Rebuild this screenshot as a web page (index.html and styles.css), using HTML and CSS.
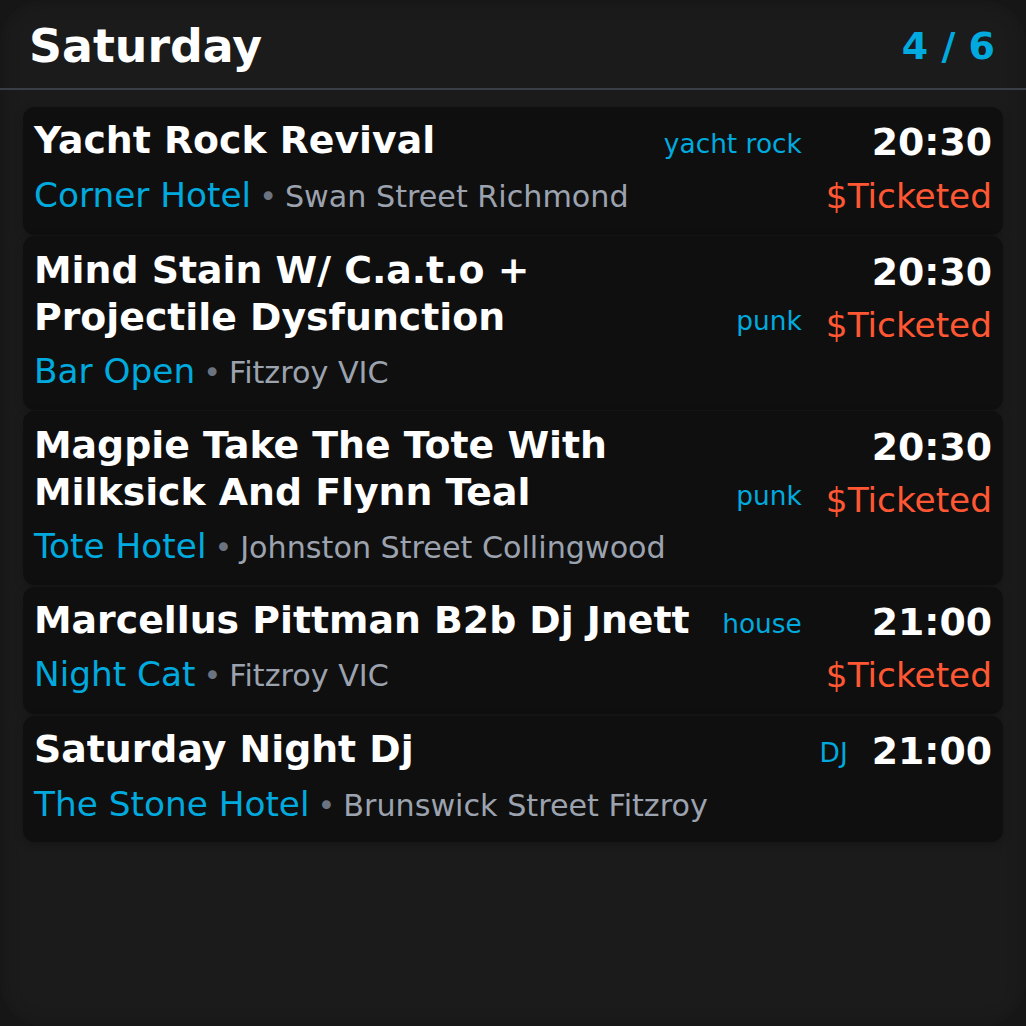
FILE: index.html
```html
<!DOCTYPE html>
<html lang="en">
<head>
<meta charset="utf-8">
<title>Saturday</title>
<link rel="stylesheet" href="styles.css">
</head>
<body>
<div class="app">
  <header class="top">
    <h1 class="day">Saturday</h1>
    <span class="count">4 / 6</span>
  </header>
  <ul class="list">
    <li class="card">
      <div class="main">
        <div class="head"><span class="title">Yacht Rock Revival</span><span class="genre">yacht rock</span></div>
        <div class="where"><span class="venue">Corner Hotel</span><span class="addr"><span class="dot">•</span>Swan Street Richmond</span></div>
      </div>
      <div class="side"><span class="time">20:30</span><span class="price">$Ticketed</span></div>
    </li>
    <li class="card">
      <div class="main">
        <div class="head"><span class="title">Mind Stain W/ C.a.t.o + Projectile Dysfunction</span><span class="genre">punk</span></div>
        <div class="where"><span class="venue">Bar Open</span><span class="addr"><span class="dot">•</span>Fitzroy VIC</span></div>
      </div>
      <div class="side"><span class="time">20:30</span><span class="price">$Ticketed</span></div>
    </li>
    <li class="card">
      <div class="main">
        <div class="head"><span class="title">Magpie Take The Tote With Milksick And Flynn Teal</span><span class="genre">punk</span></div>
        <div class="where"><span class="venue">Tote Hotel</span><span class="addr"><span class="dot">•</span>Johnston Street Collingwood</span></div>
      </div>
      <div class="side"><span class="time">20:30</span><span class="price">$Ticketed</span></div>
    </li>
    <li class="card">
      <div class="main">
        <div class="head"><span class="title">Marcellus Pittman B2b Dj Jnett</span><span class="genre">house</span></div>
        <div class="where"><span class="venue">Night Cat</span><span class="addr"><span class="dot">•</span>Fitzroy VIC</span></div>
      </div>
      <div class="side"><span class="time">21:00</span><span class="price">$Ticketed</span></div>
    </li>
    <li class="card">
      <div class="main">
        <div class="head"><span class="title">Saturday Night Dj</span><span class="genre">DJ</span></div>
        <div class="where"><span class="venue">The Stone Hotel</span><span class="addr"><span class="dot">•</span>Brunswick Street Fitzroy</span></div>
      </div>
      <div class="side"><span class="time">21:00</span></div>
    </li>
  </ul>
</div>
</body>
</html>
```

FILE: styles.css
```css
html, body {
  margin: 0;
  padding: 0;
  background: #161616;
}

body {
  font-family: "DejaVu Sans", "Liberation Sans", sans-serif;
  color: #ffffff;
}

.app {
  box-sizing: border-box;
  width: 1026px;
  height: 1026px;
  background: #1b1b1b;
  border-radius: 40px;
  box-shadow: inset 0 0 18px rgba(0, 0, 0, 0.25);
  overflow: hidden;
}

.top {
  display: flex;
  align-items: center;
  justify-content: space-between;
  padding: 19px 31px 14.5px 29px;
  border-bottom: 2px solid #393e47;
}

.day {
  margin: 0;
  font-size: 45.8px;
  line-height: 1.2;
  font-weight: 700;
  color: #ffffff;
}

.count {
  font-size: 38px;
  line-height: 1.2;
  font-weight: 700;
  color: #00aade;
}

.list {
  list-style: none;
  margin: 0;
  padding: 16.5px 23px 0;
  display: flex;
  flex-direction: column;
  gap: 1.5px;
}

.card {
  display: flex;
  gap: 24px;
  background: #0f0f0f;
  border-radius: 12px;
  padding: 10.5px 11px 17px 11px;
  box-shadow: 0 2px 8px rgba(0, 0, 0, 0.25);
}

.main {
  flex: 1;
  min-width: 0;
  display: flex;
  flex-direction: column;
  gap: 9px;
}

.head {
  display: flex;
  align-items: last baseline;
  gap: 24px;
}

.title {
  flex: 1;
  font-size: 37.8px;
  line-height: 1.25;
  font-weight: 700;
  color: #ffffff;
}

.genre {
  font-size: 26.4px;
  line-height: 1.25;
  color: #00aade;
  white-space: nowrap;
}

.where {
  line-height: 1.25;
  white-space: nowrap;
}

.venue {
  font-size: 34.3px;
  color: #00aade;
}

.addr {
  font-size: 30.2px;
  color: #9ca3af;
}

.dot {
  margin: 0 8px;
  color: #6b7280;
}

.side {
  display: flex;
  flex-direction: column;
  align-items: flex-end;
  gap: 8px;
  padding-top: 2px;
  text-align: right;
  white-space: nowrap;
}

.time {
  font-size: 37.8px;
  line-height: 1.25;
  font-weight: 700;
  color: #ffffff;
}

.price {
  font-size: 34.3px;
  line-height: 1.25;
  color: #ff5733;
}
```
